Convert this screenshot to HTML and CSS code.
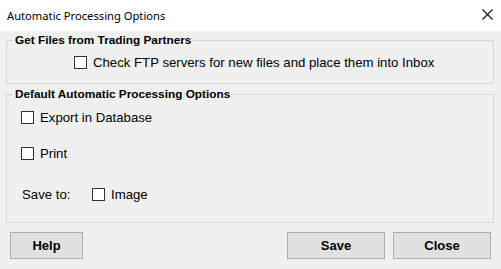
FILE: index.html
```html
<!DOCTYPE HTML>
<html lang="en">
<head>
  <meta charset="UTF-8">
  <title>Automatic Processing Options</title>
  <link rel="stylesheet" href="styles.css">
</head>
<body>
  <div class="window">
    <div class="titlebar">
      <span class="title">Automatic Processing Options</span>
      <svg class="closeX" width="11" height="11" viewBox="0 0 11 11">
        <path d="M0.5 0.5 L10.5 10.5 M10.5 0.5 L0.5 10.5" stroke="#111" stroke-width="1.1" fill="none"/>
      </svg>
    </div>

    <div class="dialog">
      <fieldset class="group groupFiles">
        <legend>Get Files from Trading Partners</legend>
        <label class="check ftp"><input type="checkbox"> Check FTP servers for new files and place them into Inbox</label>
      </fieldset>

      <fieldset class="group groupDefault">
        <legend>Default Automatic Processing Options</legend>
        <label class="check rowExport"><input type="checkbox"> Export in Database</label>
        <label class="check rowPrint"><input type="checkbox"> Print</label>
        <div class="saveRow">
          <span class="saveLabel">Save to:</span>
          <label class="check"><input type="checkbox"> Image</label>
        </div>
      </fieldset>

      <div class="buttons">
        <button class="btn btnHelp">Help</button>
        <span class="spacer"></span>
        <button class="btn btnSave">Save</button>
        <button class="btn btnClose">Close</button>
      </div>
    </div>
  </div>
</body>
</html>
```

FILE: styles.css
```css
body {
  margin: 0;
  background-color: #f0f0f0;
  font-family: "Liberation Sans", Arial, sans-serif;
  font-size: 13.2px;
  color: #000;
}

.window {
  width: 501px;
  height: 269px;
  overflow: hidden;
}

.titlebar {
  height: 31px;
  background-color: #fff;
  display: flex;
  align-items: center;
  justify-content: space-between;
  padding: 0 8px 0 7px;
  box-sizing: border-box;
}

.title {
  font-family: "Noto Sans", sans-serif;
  font-size: 11.2px;
  color: #000;
}

.closeX {
  display: block;
  margin-top: -2px;
}

.dialog {
  padding: 0 7px 0 6px;
}

.group {
  margin: 0;
  border: 1px solid #d6d6d6;
  padding: 0 10px;
}

.group legend {
  font-weight: bold;
  font-size: 11.8px;
  line-height: 15px;
  padding: 0 2px;
  margin-left: -4px;
}

.groupFiles {
  margin-top: 2px;
  padding-top: 6px;
  padding-bottom: 13px;
}

.groupDefault {
  margin-top: 3px;
  padding-top: 7px;
  padding-bottom: 20px;
}

.check {
  display: flex;
  align-items: center;
  height: 16px;
  white-space: nowrap;
}

.check input {
  appearance: none;
  -webkit-appearance: none;
  width: 13px;
  height: 13px;
  margin: 0 6px 0 0;
  border: 1px solid #333;
  background-color: #fff;
  box-sizing: border-box;
}

.ftp {
  margin-left: 57px;
}

.rowExport {
  margin-left: 4px;
}

.rowPrint {
  margin-left: 4px;
  margin-top: 20px;
}

.saveRow {
  display: flex;
  align-items: center;
  margin-left: 5px;
  margin-top: 25px;
}

.saveLabel {
  width: 70px;
}

.buttons {
  display: flex;
  margin-top: 9px;
  padding-left: 4px;
}

.spacer {
  flex: 1;
}

.btn {
  height: 27px;
  background-color: #e1e1e1;
  border: 1px solid #adadad;
  font-family: "Liberation Sans", Arial, sans-serif;
  font-size: 13px;
  font-weight: bold;
  color: #000;
  padding: 0;
}

.btnHelp {
  width: 73px;
}

.btnSave {
  width: 98px;
  margin-right: 8px;
}

.btnClose {
  width: 98px;
  margin-right: 3px;
}
```
